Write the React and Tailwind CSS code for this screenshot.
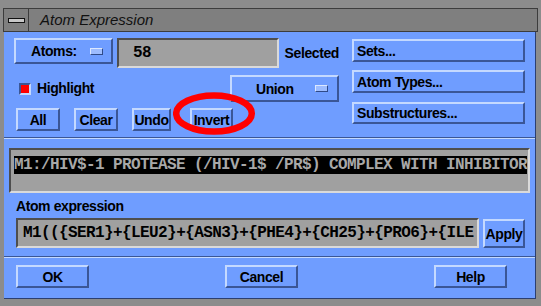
import React from 'react';

const raised = 'border-2 border-t-[#c4d9ff] border-l-[#c4d9ff] border-b-[#3a5696] border-r-[#3a5696] bg-[#6f9dff]';
const sunken = 'border-2 border-t-[#4e4e4e] border-l-[#4e4e4e] border-b-[#dadada] border-r-[#dadada] bg-[#a0a0a0]';
const mono = "font-['Liberation_Mono',monospace] font-bold text-[16px] tracking-[-0.6px]";

// justify is passed in so it never fights a default
const Btn = ({ className = '', children }) => (
    <div className={`${raised} flex items-center text-[14px] tracking-[-0.4px] font-bold text-black leading-none ${className}`}>
        {children}
    </div>
);

const Indicator = () => (
    <div className="w-[13px] h-[7px] border border-t-[#dce8ff] border-l-[#dce8ff] border-b-[#2f4a88] border-r-[#2f4a88] bg-[#9dbcff]" />
);

const Separator = ({ className = '' }) => (
    <div className={`h-[2px] border-t border-t-[#3a5696] border-b border-b-[#c4d9ff] ${className}`} />
);

export default function App() {
    return (
        <div className="w-[541px] h-[306px] bg-[#8c8c8c] flex flex-col pt-[8px] px-[3px] font-['Liberation_Sans',Arial,sans-serif] overflow-hidden">
            {/* title bar */}
            <div className="h-[24px] flex bg-[#7f7f7f] border border-[#3c3c3c] shrink-0">
                <div className="w-[25px] flex items-center justify-center border-r border-r-[#3c3c3c]">
                    <div className="w-[17px] h-[5px] border border-[#111] bg-[#c8c8c8]" />
                </div>
                <div className="pl-[11px] flex items-center text-[15px] italic text-[#111]">Atom Expression</div>
            </div>

            {/* body */}
            <div className="ml-[1px] w-[532px] h-[267px] bg-[#6f9dff] border-r border-r-[#2c3f70] border-b border-b-[#2c3f70] flex flex-col pt-[6px] relative">
                <div className="flex pl-[10px]">
                    {/* left column */}
                    <div className="w-[325px] flex flex-col">
                        <div className="flex items-start h-[30px]">
                            <Btn className="w-[99px] h-[26px] justify-between pl-[15px] pr-[8px]">
                                <span>Atoms:</span>
                                <Indicator />
                            </Btn>
                            <div className={`${sunken} ${mono} ml-[4px] w-[162px] h-[30px] flex items-center pl-[14px] text-black`}>
                                58
                            </div>
                            <span className="ml-[6px] self-center text-[14px] tracking-[-0.4px] font-bold text-black">Selected</span>
                        </div>
                        <div className="mt-[7px] flex items-center h-[27px]">
                            <div className="ml-[5px] w-[12px] h-[12px] border-2 border-t-[#3a5696] border-l-[#3a5696] border-b-[#c4d9ff] border-r-[#c4d9ff] bg-[#ff0000]" />
                            <span className="ml-[6px] text-[14px] tracking-[-0.4px] font-bold text-black">Highlight</span>
                            <Btn className="ml-auto w-[109px] h-[27px] justify-between pl-[24px] pr-[9px]">
                                <span>Union</span>
                                <Indicator />
                            </Btn>
                        </div>
                        <div className="mt-[6px] flex h-[23px]">
                            <Btn className="ml-[2px] w-[44px] justify-center">All</Btn>
                            <Btn className="ml-[14px] w-[44px] justify-center">Clear</Btn>
                            <Btn className="ml-[14px] w-[39px] justify-center">Undo</Btn>
                            <Btn className="ml-[19px] w-[43px] justify-center">Invert</Btn>
                        </div>
                    </div>
                    {/* right column */}
                    <div className="ml-[13px] w-[173px] flex flex-col pt-[1px]">
                        <Btn className="h-[23px] justify-start pl-[3px]">Sets...</Btn>
                        <Btn className="mt-[8px] h-[23px] justify-start pl-[3px]">Atom Types...</Btn>
                        <Btn className="mt-[9px] h-[22px] justify-start pl-[3px]">Substructures...</Btn>
                    </div>
                </div>

                <Separator className="mt-[6px]" />

                <div className={`${sunken} mt-[9px] mx-[5px] h-[45px] pl-[3px] pt-[2px]`}>
                    <span className={`${mono} bg-black text-[#a8a8a8] leading-[17px] whitespace-nowrap`}>
                        M1:/HIV$-1 PROTEASE (/HIV-1$ /PR$) COMPLEX WITH INHIBITOR
                    </span>
                </div>

                <div className="mt-[5px] ml-[12px] h-[16px] leading-[16px] text-[14px] tracking-[-0.4px] font-bold text-black">Atom expression</div>

                <div className="mt-[4px] flex pl-[12px]">
                    <div className={`${sunken} ${mono} w-[463px] h-[30px] flex items-center pl-[5px] overflow-hidden text-black whitespace-nowrap`}>
                        M1(({'{'}SER1{'}'}+{'{'}LEU2{'}'}+{'{'}ASN3{'}'}+{'{'}PHE4{'}'}+{'{'}CH25{'}'}+{'{'}PRO6{'}'}+{'{'}ILE
                    </div>
                    <Btn className="ml-[4px] mt-[1px] w-[42px] h-[29px] justify-center">Apply</Btn>
                </div>

                <Separator className="mt-[8px]" />

                <div className="mt-[7px] flex pl-[12px] gap-[136px]">
                    <Btn className="w-[73px] h-[23px] justify-center">OK</Btn>
                    <Btn className="w-[73px] h-[23px] justify-center">Cancel</Btn>
                    <Btn className="w-[73px] h-[23px] justify-center">Help</Btn>
                </div>

                {/* red annotation ring */}
                <svg className="absolute left-[169px] top-[60px] pointer-events-none" width="86" height="46" viewBox="0 0 86 46">
                    <ellipse cx="41" cy="21.5" rx="37.8" ry="18" fill="none" stroke="#ff0000" strokeWidth="6.5" />
                </svg>
            </div>
        </div>
    );
}
